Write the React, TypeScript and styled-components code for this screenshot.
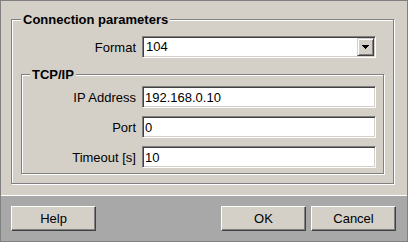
import styled, { createGlobalStyle } from "styled-components";

const GlobalStyle = createGlobalStyle`
  html, body {
    margin: 0;
    padding: 0;
    background: #d4d0c8;
  }
  * {
    box-sizing: border-box;
  }
`;

const Dialog = styled.div`
  width: 408px;
  height: 242px;
  border: 1px solid #808080;
  background: #d4d0c8;
  display: flex;
  flex-direction: column;
  font-family: "Liberation Sans", Arial, sans-serif;
  font-size: 13px;
  color: #000;
`;

const Body = styled.div`
  padding: 18px 13px 11px 10px;
`;

// etched frame with a caption sitting on the top line
const Group = styled.div<{ $pad: string }>`
  position: relative;
  border: 1px solid #808080;
  box-shadow: inset 1px 1px 0 #fff, 1px 1px 0 #fff;
  padding: ${(p) => p.$pad};
  display: flex;
  flex-direction: column;
  gap: 8px;
`;

const Legend = styled.span<{ $left: number }>`
  position: absolute;
  top: -8px;
  left: ${(p) => p.$left}px;
  padding: 0 2px;
  background: #d4d0c8;
  font-weight: bold;
  line-height: 15px;
`;

const Row = styled.div<{ $right?: number }>`
  display: grid;
  grid-template-columns: 1fr 234px;
  column-gap: 6px;
  align-items: center;
  margin-right: ${(p) => p.$right ?? 0}px;
`;

const Label = styled.label`
  text-align: right;
  line-height: 15px;
  white-space: nowrap;
`;

const Field = styled.input`
  height: 22px;
  width: 234px;
  margin: 0;
  padding: 0 2px;
  border: 1px solid;
  border-color: #808080 #fff #fff #808080;
  box-shadow: inset 1px 1px 0 #404040, inset -1px -1px 0 #d4d0c8;
  background: #fff;
  font-family: inherit;
  font-size: 13px;
  color: #000;
  outline: none;
  border-radius: 0;
`;

const Combo = styled.div`
  height: 22px;
  width: 234px;
  display: flex;
  align-items: center;
  border: 1px solid;
  border-color: #808080 #fff #fff #808080;
  box-shadow: inset 1px 1px 0 #404040, inset -1px -1px 0 #d4d0c8;
  background: #fff;
  padding: 1px 1px 1px 3px;
`;

const ComboValue = styled.span`
  flex: 1;
  line-height: 18px;
`;

const ComboButton = styled.div`
  width: 17px;
  height: 18px;
  background: #d4d0c8;
  border: 1px solid;
  border-color: #d4d0c8 #404040 #404040 #d4d0c8;
  box-shadow: inset 1px 1px 0 #fff, inset -1px -1px 0 #808080;
  display: flex;
  align-items: center;
  justify-content: center;
`;

const Inner = styled.div`
  margin-top: 8px;
`;

const ButtonBar = styled.div`
  flex: 1;
  border-top: 1px solid #fff;
  background: #a8a8a8;
  display: flex;
  align-items: flex-start;
  gap: 5px;
  padding: 10px 11px 0 10px;
`;

const Button = styled.button<{ $push?: boolean }>`
  width: 85px;
  height: 25px;
  margin: 0;
  margin-right: ${(p) => (p.$push ? "auto" : "0")};
  padding: 0;
  background: #d4d0c8;
  border: 1px solid;
  border-color: #fff #404040 #404040 #fff;
  box-shadow: inset -1px -1px 0 #808080;
  border-radius: 0;
  font-family: inherit;
  font-size: 13px;
  color: #000;
`;

const fields = [
  { label: "IP Address", value: "192.168.0.10" },
  { label: "Port", value: "0" },
  { label: "Timeout [s]", value: "10" },
];

export default function App() {
  return (
    <>
      <GlobalStyle />
      <Dialog>
        <Body>
          <Group $pad="16px 9px 9px 9px">
            <Legend $left={9}>Connection parameters</Legend>
            <Row $right={8}>
              <Label>Format</Label>
              <Combo>
                <ComboValue>104</ComboValue>
                <ComboButton>
                  <svg width="7" height="4" viewBox="0 0 7 4">
                    <path d="M0 0h7v1h-1v1h-1v1h-1v1h-1v-1h-1v-1h-1v-1h-1z" fill="#000" />
                  </svg>
                </ComboButton>
              </Combo>
            </Row>
            <Inner>
              <Group $pad="11px 7px 5px 0">
                <Legend $left={8}>TCP/IP</Legend>
                {fields.map((f) => (
                  <Row key={f.label}>
                    <Label>{f.label}</Label>
                    <Field readOnly defaultValue={f.value} />
                  </Row>
                ))}
              </Group>
            </Inner>
          </Group>
        </Body>
        <ButtonBar>
          <Button $push>Help</Button>
          <Button>OK</Button>
          <Button>Cancel</Button>
        </ButtonBar>
      </Dialog>
    </>
  );
}
